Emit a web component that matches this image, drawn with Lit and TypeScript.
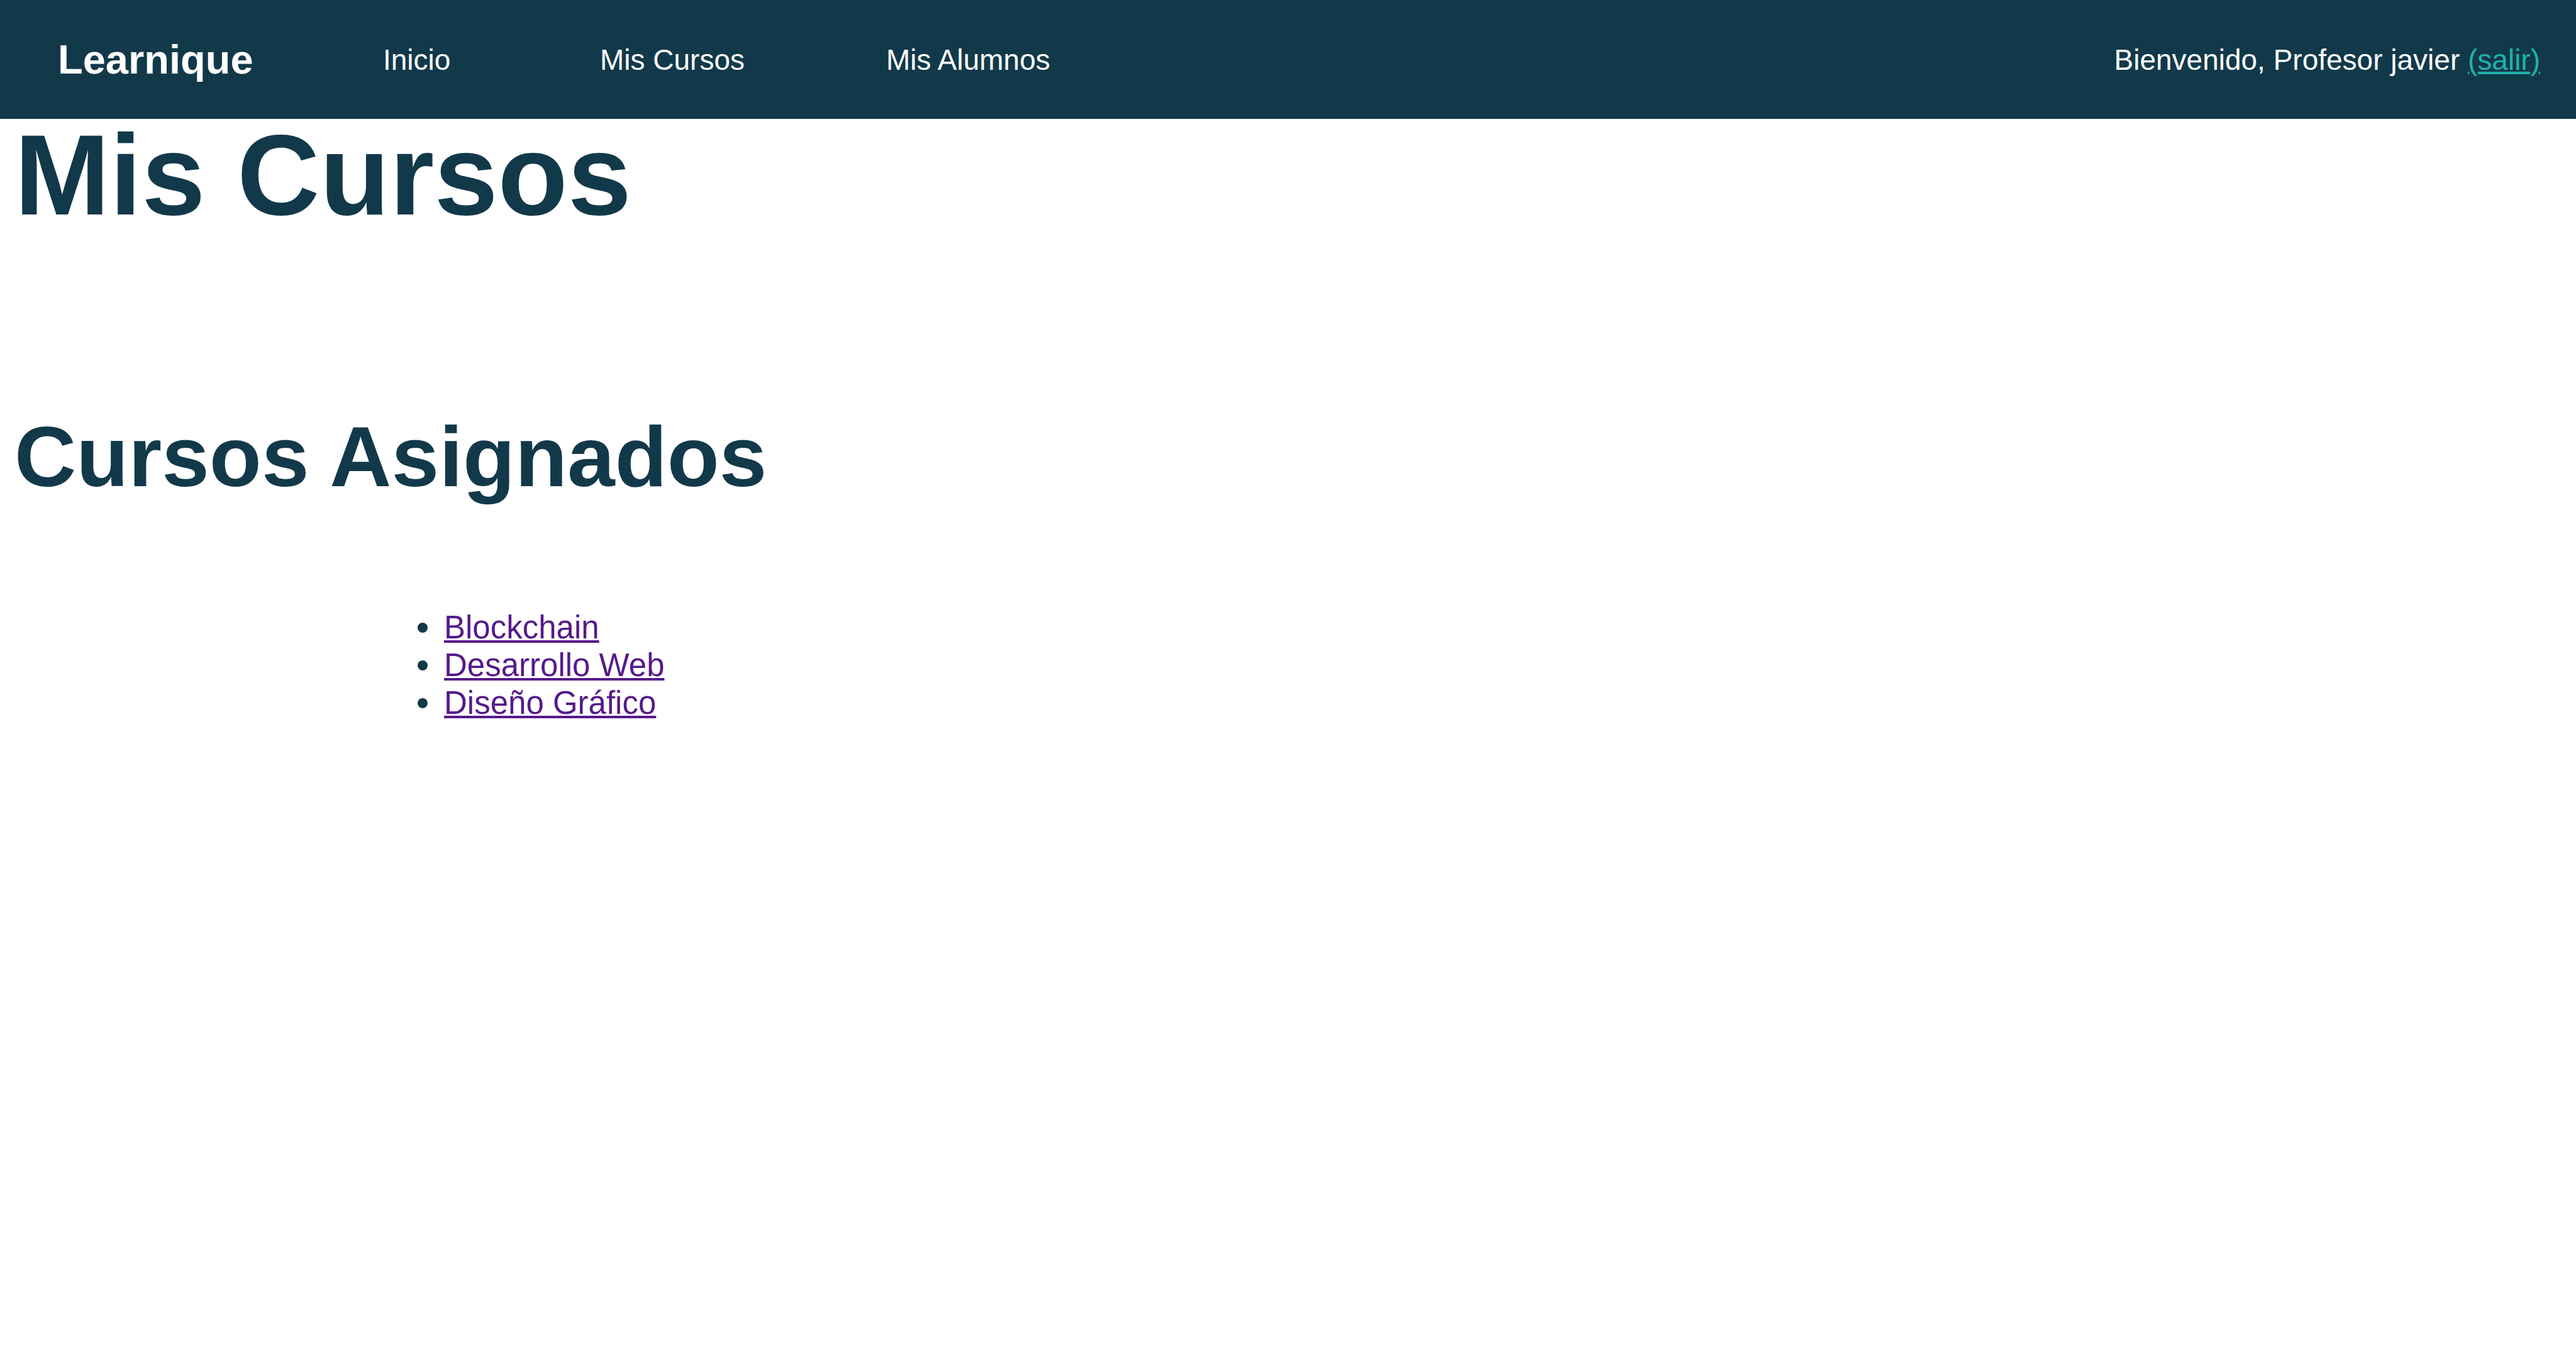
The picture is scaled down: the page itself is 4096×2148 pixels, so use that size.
import { LitElement, html, css } from "lit";
import { customElement, property } from "lit/decorators.js";

interface Enlace {
  texto: string;
  href: string;
}

@customElement("site-header")
class SiteHeader extends LitElement {
  @property() usuario = "";
  @property({ attribute: false }) enlaces: Enlace[] = [];

  static styles = css`
    :host {
      display: block;
    }
    .bar {
      display: flex;
      align-items: center;
      box-sizing: border-box;
      min-height: 189px;
      padding: 0 57px 0 92px;
      background: #12394a;
      color: #ffffff;
      font-size: 46px;
      line-height: 52px;
    }
    .brand {
      min-width: 314px;
      margin-right: 203px;
      color: inherit;
      font-size: 65px;
      font-weight: bold;
      line-height: 76px;
      text-decoration: none;
    }
    .menu {
      display: flex;
      flex-wrap: wrap;
      gap: 225px;
      margin: 0;
      padding: 0;
      list-style: none;
    }
    .item {
      min-width: 120px;
    }
    .link {
      color: inherit;
      text-decoration: none;
    }
    .user {
      margin: 0 0 0 auto;
    }
    .exit {
      color: #20b2aa;
      text-decoration-thickness: 4px;
      text-underline-offset: 3px;
    }
  `;

  render() {
    return html`
      <header class="bar">
        <a class="brand" href="#inicio">Learnique</a>
        <nav>
          <ul class="menu">
            ${this.enlaces.map(
              (e) => html`<li class="item"><a class="link" href=${e.href}>${e.texto}</a></li>`
            )}
          </ul>
        </nav>
        <p class="user">
          Bienvenido, Profesor ${this.usuario} <a class="exit" href="#salir">(salir)</a>
        </p>
      </header>
    `;
  }
}

@customElement("course-list")
class CourseList extends LitElement {
  @property({ attribute: false }) cursos: Enlace[] = [];

  static styles = css`
    :host {
      display: block;
    }
    .list {
      margin: 0;
      padding: 0 0 0 641px;
      font-size: 51px;
      line-height: 60px;
      list-style: none;
    }
    .row {
      display: flex;
      align-items: center;
      gap: 26px;
    }
    .row::before {
      content: "";
      width: 16px;
      height: 16px;
      border-radius: 50%;
      background: currentColor;
    }
    .course {
      color: #551a8b;
      text-decoration-thickness: 4px;
      text-underline-offset: 3px;
    }
  `;

  render() {
    return html`
      <ul class="list">
        ${this.cursos.map(
          (c) => html`<li class="row"><a class="course" href=${c.href}>${c.texto}</a></li>`
        )}
      </ul>
    `;
  }
}

@customElement("app-root")
class AppRoot extends LitElement {
  private enlaces: Enlace[] = [
    { texto: "Inicio", href: "#inicio" },
    { texto: "Mis Cursos", href: "#cursos" },
    { texto: "Mis Alumnos", href: "#alumnos" },
  ];

  private cursos: Enlace[] = [
    { texto: "Blockchain", href: "#blockchain" },
    { texto: "Desarrollo Web", href: "#desarrollo-web" },
    { texto: "Diseño Gráfico", href: "#diseno-grafico" },
  ];

  static styles = css`
    :host {
      display: block;
      min-height: 100vh;
      background: #ffffff;
      color: #12394a;
      font-family: "Liberation Sans", Arial, Helvetica, sans-serif;
    }
    .content {
      padding: 0 23px;
    }
    .title {
      margin: 0 0 279px;
      font-size: 182px;
      line-height: 178px;
    }
    .subtitle {
      margin: 0 0 162px;
      font-size: 136px;
      line-height: 160px;
    }
  `;

  render() {
    return html`
      <site-header usuario="javier" .enlaces=${this.enlaces}></site-header>
      <main class="content">
        <h1 class="title">Mis Cursos</h1>
        <h2 class="subtitle">Cursos Asignados</h2>
        <course-list .cursos=${this.cursos}></course-list>
      </main>
    `;
  }
}
